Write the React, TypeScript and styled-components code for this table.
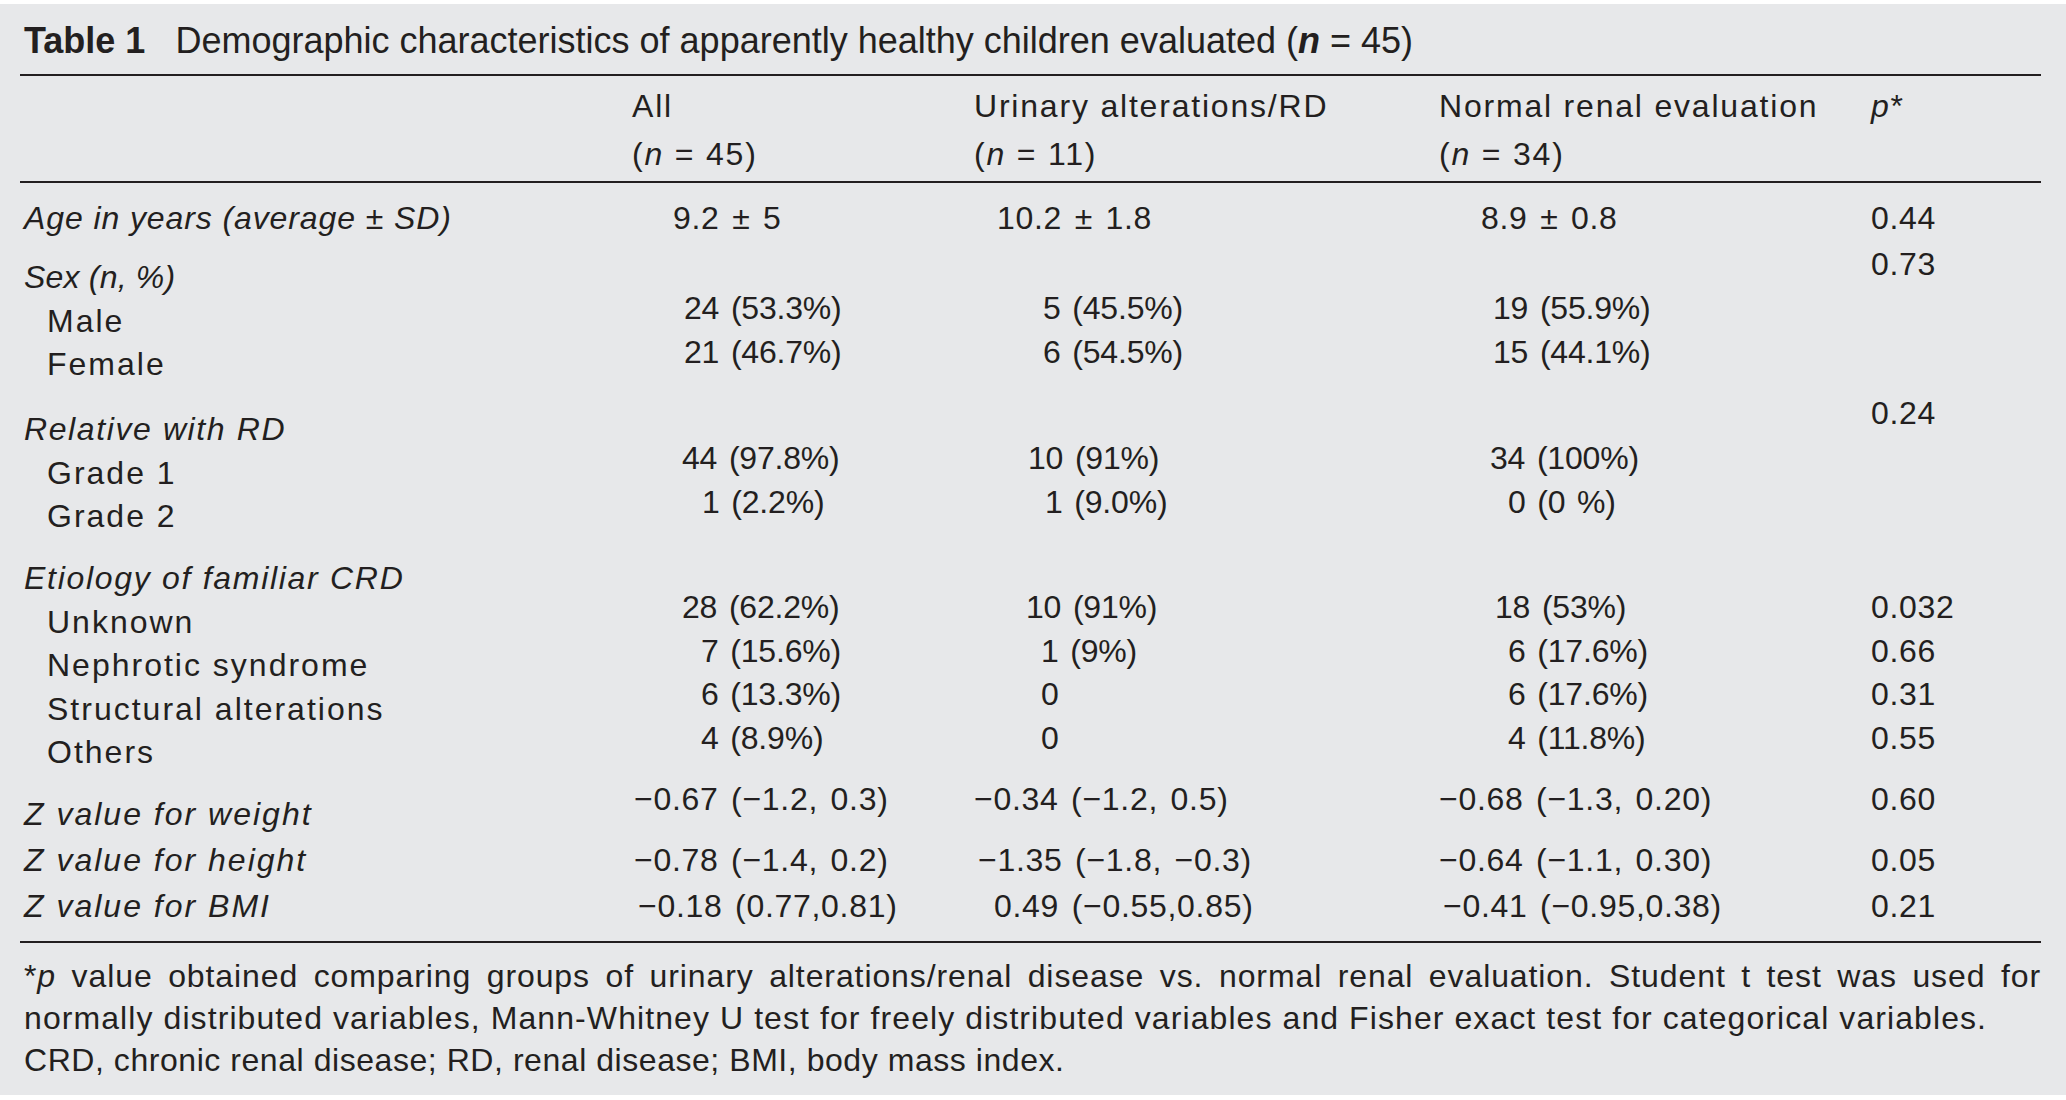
import React from 'react';
import styled, { createGlobalStyle } from 'styled-components';

const INK = '#231f20';
const COLS = '612px 342px 465px 428px 1fr';

const Global = createGlobalStyle`
  html, body { margin: 0; padding: 0; background: #ffffff; }
  body {
    font-family: "Liberation Sans", Arial, sans-serif;
    color: ${INK};
  }
`;

const Panel = styled.div`
  margin-top: 4px;
  height: 1091px;
  box-sizing: border-box;
  background: #e7e8ea;
  padding: 0 25px 0 20px;
`;

const Caption = styled.div`
  padding: 11.5px 0 8.5px 4px;
  font-size: 36px;
  line-height: 50px;
  white-space: nowrap;
`;

const TableNo = styled.span`
  display: inline-block;
  font-weight: 700;
  margin-right: 30px;
`;

const Head = styled.div`
  display: grid;
  grid-template-columns: ${COLS};
  border-top: 2px solid ${INK};
  border-bottom: 2px solid ${INK};
  padding: 7px 0 3px;
  font-size: 32px;
  line-height: 47.5px;
  letter-spacing: 1.8px;
`;

const HeadCell = styled.div<{ $indent?: number }>`
  display: flex;
  flex-direction: column;
  padding-left: ${(p) => p.$indent ?? 0}px;
  white-space: nowrap;
`;

const Body = styled.div`
  padding: 14px 0 12.5px;
  border-bottom: 2px solid ${INK};
  font-size: 32px;
  line-height: 43.5px;
`;

const Group = styled.div<{ $mt: number }>`
  display: grid;
  grid-template-columns: ${COLS};
  align-items: start;
  margin-top: ${(p) => p.$mt}px;
`;

const Cell = styled.div<{ $pt: number }>`
  display: flex;
  flex-direction: column;
  padding-top: ${(p) => p.$pt}px;
  white-space: nowrap;
`;

const Label = styled.div<{ $sub?: boolean; $italic?: boolean; $track: number }>`
  padding-left: ${(p) => (p.$sub ? 27 : 4)}px;
  font-style: ${(p) => (p.$italic ? 'italic' : 'normal')};
  letter-spacing: ${(p) => p.$track}px;
`;

const Value = styled.div<{ $x: number; $tight?: boolean }>`
  padding-left: ${(p) => p.$x}px;
  letter-spacing: ${(p) => (p.$tight ? -0.2 : 0.7)}px;
  word-spacing: 3px;
`;

const Foot = styled.div`
  padding: 12px 0 0 4px;
  font-size: 32px;
  line-height: 42px;
`;

const FootLine = styled.div<{ $justify?: boolean; $track: number }>`
  letter-spacing: ${(p) => p.$track}px;
  text-align: ${(p) => (p.$justify ? 'justify' : 'left')};
  text-align-last: ${(p) => (p.$justify ? 'justify' : 'auto')};
`;

type V = { v: string; x: number };
type L = { t: string; italic?: boolean; sub?: boolean; track?: number };
type G = {
  mt: number;
  labelPt: number;
  valuePt: number;
  pPt: number;
  labels: L[];
  cols: V[][];
  p: string[];
};

const groups: G[] = [
  {
    mt: 0,
    labelPt: 0,
    valuePt: 0,
    pPt: 0,
    labels: [{ t: 'Age in years (average ± SD)', italic: true, track: 0.9 }],
    cols: [
      [{ v: '9.2 ± 5', x: 41 }],
      [{ v: '10.2 ± 1.8', x: 23 }],
      [{ v: '8.9 ± 0.8', x: 42 }],
    ],
    p: ['0.44'],
  },
  {
    mt: 2.5,
    labelPt: 13,
    valuePt: 44,
    pPt: 0,
    labels: [
      { t: 'Sex (n, %)', italic: true, track: 0.2 },
      { t: 'Male', sub: true },
      { t: 'Female', sub: true },
    ],
    cols: [
      [
        { v: '24 (53.3%)', x: 52 },
        { v: '21 (46.7%)', x: 52 },
      ],
      [
        { v: '5 (45.5%)', x: 69 },
        { v: '6 (54.5%)', x: 69 },
      ],
      [
        { v: '19 (55.9%)', x: 54 },
        { v: '15 (44.1%)', x: 54 },
      ],
    ],
    p: ['0.73'],
  },
  {
    mt: 5.5,
    labelPt: 16,
    valuePt: 45,
    pPt: 0,
    labels: [
      { t: 'Relative with RD', italic: true, track: 1.6 },
      { t: 'Grade 1', sub: true },
      { t: 'Grade 2', sub: true },
    ],
    cols: [
      [
        { v: '44 (97.8%)', x: 50 },
        { v: '1 (2.2%)', x: 70 },
      ],
      [
        { v: '10 (91%)', x: 54 },
        { v: '1 (9.0%)', x: 71 },
      ],
      [
        { v: '34 (100%)', x: 51 },
        { v: '0 (0 %)', x: 69 },
      ],
    ],
    p: ['0.24'],
  },
  {
    mt: 18.5,
    labelPt: 0,
    valuePt: 29,
    pPt: 29,
    labels: [
      { t: 'Etiology of familiar CRD', italic: true, track: 1.7 },
      { t: 'Unknown', sub: true },
      { t: 'Nephrotic syndrome', sub: true },
      { t: 'Structural alterations', sub: true },
      { t: 'Others', sub: true },
    ],
    cols: [
      [
        { v: '28 (62.2%)', x: 50 },
        { v: '7 (15.6%)', x: 69 },
        { v: '6 (13.3%)', x: 69 },
        { v: '4 (8.9%)', x: 69 },
      ],
      [
        { v: '10 (91%)', x: 52 },
        { v: '1 (9%)', x: 67 },
        { v: '0', x: 67 },
        { v: '0', x: 67 },
      ],
      [
        { v: '18 (53%)', x: 56 },
        { v: '6 (17.6%)', x: 69 },
        { v: '6 (17.6%)', x: 69 },
        { v: '4 (11.8%)', x: 69 },
      ],
    ],
    p: ['0.032', '0.66', '0.31', '0.55'],
  },
  {
    mt: 3.5,
    labelPt: 15,
    valuePt: 0,
    pPt: 0,
    labels: [{ t: 'Z value for weight', italic: true }],
    cols: [
      [{ v: '−0.67 (−1.2, 0.3)', x: 2 }],
      [{ v: '−0.34 (−1.2, 0.5)', x: 0 }],
      [{ v: '−0.68 (−1.3, 0.20)', x: 0 }],
    ],
    p: ['0.60'],
  },
  {
    mt: 2.5,
    labelPt: 0,
    valuePt: 0,
    pPt: 0,
    labels: [{ t: 'Z value for height', italic: true }],
    cols: [
      [{ v: '−0.78 (−1.4, 0.2)', x: 2 }],
      [{ v: '−1.35 (−1.8, −0.3)', x: 4 }],
      [{ v: '−0.64 (−1.1, 0.30)', x: 0 }],
    ],
    p: ['0.05'],
  },
  {
    mt: 2.5,
    labelPt: 0,
    valuePt: 0,
    pPt: 0,
    labels: [{ t: 'Z value for BMI', italic: true }],
    cols: [
      [{ v: '−0.18 (0.77,0.81)', x: 6 }],
      [{ v: '0.49 (−0.55,0.85)', x: 20 }],
      [{ v: '−0.41 (−0.95,0.38)', x: 4 }],
    ],
    p: ['0.21'],
  },
];

const N = ({ n }: { n: string }) => (
  <>
    (<i>n</i> = {n})
  </>
);

export default function App() {
  return (
    <>
      <Global />
      <Panel>
        <Caption>
          <TableNo>Table 1</TableNo>
          Demographic characteristics of apparently healthy children evaluated (
          <b>
            <i>n</i>
          </b>{' '}
          = 45)
        </Caption>
        <Head>
          <HeadCell />
          <HeadCell>
            <span>All</span>
            <span>
              <N n="45" />
            </span>
          </HeadCell>
          <HeadCell>
            <span>Urinary alterations/RD</span>
            <span>
              <N n="11" />
            </span>
          </HeadCell>
          <HeadCell>
            <span>Normal renal evaluation</span>
            <span>
              <N n="34" />
            </span>
          </HeadCell>
          <HeadCell $indent={4}>
            <span>
              <i>p</i>*
            </span>
          </HeadCell>
        </Head>
        <Body>
          {groups.map((g, gi) => (
            <Group key={gi} $mt={g.mt}>
              <Cell $pt={g.labelPt}>
                {g.labels.map((l, li) => (
                  <Label key={li} $sub={l.sub} $italic={l.italic} $track={l.track ?? 2}>
                    {l.t}
                  </Label>
                ))}
              </Cell>
              {g.cols.map((col, ci) => (
                <Cell key={ci} $pt={g.valuePt}>
                  {col.map((c, vi) => (
                    <Value key={vi} $x={c.x} $tight={c.v.includes('%')}>
                      {c.v}
                    </Value>
                  ))}
                </Cell>
              ))}
              <Cell $pt={g.pPt}>
                {g.p.map((pv, pi) => (
                  <Value key={pi} $x={4}>
                    {pv}
                  </Value>
                ))}
              </Cell>
            </Group>
          ))}
        </Body>
        <Foot>
          <FootLine $justify $track={0.9}>
            *<i>p</i> value obtained comparing groups of urinary alterations/renal disease vs.
            normal renal evaluation. Student t test was used for
          </FootLine>
          <FootLine $track={1.08}>
            normally distributed variables, Mann-Whitney U test for freely distributed variables
            and Fisher exact test for categorical variables.
          </FootLine>
          <FootLine $track={0.55}>
            CRD, chronic renal disease; RD, renal disease; BMI, body mass index.
          </FootLine>
        </Foot>
      </Panel>
    </>
  );
}
